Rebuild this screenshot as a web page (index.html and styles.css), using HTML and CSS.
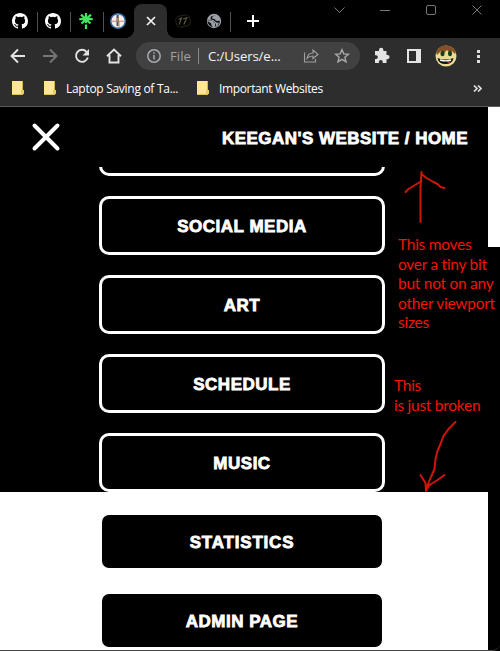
FILE: index.html
```html
<!DOCTYPE html>
<html lang="en">
<head>
<meta charset="utf-8">
<title>Keegan's Website</title>
<link rel="stylesheet" href="styles.css">
</head>
<body>
<div class="window">
  <div class="tabs">
    <div class="tab github"><svg width="16" height="16" viewBox="0 0 16 16"><path fill="#fff" d="M8 0C3.58 0 0 3.58 0 8c0 3.54 2.29 6.53 5.47 7.59.4.07.55-.17.55-.38 0-.19-.01-.82-.01-1.49-2.01.37-2.53-.49-2.69-.94-.09-.23-.48-.94-.82-1.13-.28-.15-.68-.52-.01-.53.63-.01 1.08.58 1.23.82.72 1.21 1.87.87 2.33.66.07-.52.28-.87.51-1.07-1.78-.2-3.64-.89-3.64-3.95 0-.87.31-1.59.82-2.15-.08-.2-.36-1.02.08-2.12 0 0 .67-.21 2.2.82a7.6 7.6 0 0 1 4 0c1.53-1.04 2.2-.82 2.2-.82.44 1.1.16 1.92.08 2.12.51.56.82 1.27.82 2.15 0 3.07-1.87 3.75-3.65 3.95.29.25.54.73.54 1.48 0 1.07-.01 1.93-.01 2.2 0 .21.15.46.55.38A8.01 8.01 0 0 0 16 8c0-4.42-3.58-8-8-8z"/></svg></div>
    <div class="tab github"><svg width="16" height="16" viewBox="0 0 16 16"><path fill="#fff" d="M8 0C3.58 0 0 3.58 0 8c0 3.54 2.29 6.53 5.47 7.59.4.07.55-.17.55-.38 0-.19-.01-.82-.01-1.49-2.01.37-2.53-.49-2.69-.94-.09-.23-.48-.94-.82-1.13-.28-.15-.68-.52-.01-.53.63-.01 1.08.58 1.23.82.72 1.21 1.87.87 2.33.66.07-.52.28-.87.51-1.07-1.78-.2-3.64-.89-3.64-3.95 0-.87.31-1.59.82-2.15-.08-.2-.36-1.02.08-2.12 0 0 .67-.21 2.2.82a7.6 7.6 0 0 1 4 0c1.53-1.04 2.2-.82 2.2-.82.44 1.1.16 1.92.08 2.12.51.56.82 1.27.82 2.15 0 3.07-1.87 3.75-3.65 3.95.29.25.54.73.54 1.48 0 1.07-.01 1.93-.01 2.2 0 .21.15.46.55.38A8.01 8.01 0 0 0 16 8c0-4.42-3.58-8-8-8z"/></svg></div>
    <div class="tab linktree"><svg width="16" height="16" viewBox="0 0 16 16"><path stroke="#43e660" stroke-width="2.200" d="M8 0v10M1.300 6.200h13.400M3 1.600l9.500 8.900M13 1.600l-9.500 8.900M8 11.500V16" fill="none"/></svg></div>
    <div class="tab last"><svg width="16" height="16" viewBox="0 0 16 16"><circle cx="8" cy="8" r="7.300" fill="#f2eeee" stroke="#2e69a0" stroke-width="1.500"/><path d="M2 8.300h12" stroke="#d99" stroke-width="1.300"/><path d="M7.600 2v11" stroke="#555" stroke-width="2.200"/><path d="M7.700 5v4M9 9v5" stroke="#c49a48" stroke-width="1"/></svg></div>
    <div class="tab active"><svg width="10" height="10" viewBox="0 0 10 10"><path d="M1 1l8 8M9 1L1 9" stroke="#f4f4f4" stroke-width="1.700"/></svg></div>
    <div class="tab after"><svg width="16" height="16" viewBox="0 0 16 16" fill="none"><rect x="1" y="2.500" width="14" height="11" rx="4" stroke="#25241c" transform="rotate(-12 8 8)"/><path d="M3.500 6.500L6.500 5l-2.300 6.500M8 6l3.800-1.200-3 6.700" stroke="#5b5640" stroke-width="1.200"/></svg></div>
    <div class="tab globe"><svg width="16" height="16" viewBox="0 0 16 16"><circle cx="8" cy="8" r="7.200" fill="#9ba0a6"/><path fill="#0a0a0a" d="M9.500 2.200L6.300 3.800 6 5.500l3 .7.500 1.300 1.500.5 2.700-.3A6 6 0 0 1 11 13.200l-1.200-.4.200-2L8.500 10 5.500 7.500 2.300 6.800 2 8.500l3 1.700.8 2.800 1.500 1.200A6.500 6.500 0 0 1 1.700 7l3.500.7 2.500 1 1.500 1.800L9 13.700l2.500-1 1.500-3-2.500-.3-1.800-1.200L7.500 7 4.500 6.500l.5-3z"/></svg></div>
    <svg class="plus" width="12" height="12" viewBox="0 0 12 12"><path d="M6 0v12M0 6h12" stroke="#fff" stroke-width="2"/></svg>
    <svg class="controls" width="160" height="12" viewBox="0 0 160 12" fill="none" stroke="#777" stroke-width="1"><path d="M4.500 3.500l5 5 5-5M50 6.500h10M142.500 1.500l9 9M151.500 1.500l-9 9"/><rect x="96.500" y="1.500" width="9" height="9" rx="1.500"/></svg>
  </div>
  <div class="toolbar">
    <svg class="nav" width="124" height="20" viewBox="0 0 124 20" fill="none" stroke="#e3e3e3" stroke-width="1.900">
      <path d="M16 10H3M9 3.500L2.500 10 9 16.500"/>
      <path stroke="#767676" d="M34 10h13M41 3.500l6.500 6.500-6.500 6.500"/>
      <path d="M77.500 5.800a6 6 0 1 0 1.300 5.700"/><path fill="#e3e3e3" stroke="none" d="M80 3v6.500h-6.500z"/>
      <path d="M98 10.200l7-6.700 7 6.700M100.500 9v7.500h9V9" />
    </svg>
    <div class="address">
      <svg width="14" height="14" viewBox="0 0 14 14" fill="none" stroke="#a8acb0" stroke-width="1.500"><circle cx="7" cy="7" r="6.200"/><path d="M7 6v4.500M7 3.300v1.500"/></svg>
      <span class="scheme">File</span><span class="bar"></span><span class="path">C:/Users/e...</span>
      <svg class="share" width="16" height="16" viewBox="0 0 16 16" fill="none" stroke="#a0a0a0" stroke-width="1.100"><path d="M1.500 4.500v9.500h11v-3M4 10.500c.5-3.600 2.500-5.400 6-5.500V2l5 4.500-5 4V8C7 8 5.500 8.700 4 10.500z"/></svg>
      <svg class="star" width="16" height="16" viewBox="0 0 16 16" fill="none" stroke="#aaa" stroke-width="1.400"><path d="M8 1.700l1.800 4.200 4.600.4-3.500 3 1.100 4.500L8 11.400l-4 2.400 1.100-4.500-3.500-3 4.600-.4z"/></svg>
    </div>
    <svg class="tools" width="122" height="24" viewBox="0 0 122 24">
      <path fill="#e4e4e4" d="M2 7h4V6a2.200 2.200 0 0 1 4.400 0v1H13.500v4h1a2.100 2.100 0 0 1 0 4.200h-1V19H9.700v-1.200a1.900 1.900 0 0 0-3.800 0V19H2v-4h1a1.900 1.900 0 0 0 0-3.800H2z"/>
      <path fill="#e4e4e4" fill-rule="evenodd" d="M34 5h14v14H34zM36 7v10h7V7z"/>
      <circle cx="73" cy="12" r="10.500" fill="#e9db91"/>
      <path fill="#865025" d="M63 8Q66 1 73 1.500T83 8l-1 2-3-3-2 2-3-3-3 3-3-2-4 4z"/>
      <ellipse cx="69.500" cy="9.500" rx="2" ry="2.800" fill="#173e1b"/><ellipse cx="77" cy="9.500" rx="2" ry="2.800" fill="#173e1b"/>
      <path fill="#111" d="M64.500 14q8 3 16 0-1 6-8 6t-8-6z"/><path d="M67 16q6 1.700 11 0" stroke="#fff" stroke-width="1.400" fill="none"/><path fill="#cf3030" d="M74 18.500l4-1-2 2z"/>
      <path fill="#ddd" d="M104 6h3v3h-3zM104 11h3v3h-3zM104 16h3v3h-3z"/>
    </svg>
  </div>
  <div class="bookmarks">
    <i class="folder"></i><i class="folder second"></i><span class="laptop">Laptop Saving of Ta...</span>
    <i class="folder third"></i><span class="important">Important Websites</span>
    <svg class="more" width="9" height="7" viewBox="0 0 9 7" fill="none" stroke="#ddd" stroke-width="1.700"><path d="M1 .5l3 3-3 3M5 .5l3 3-3 3"/></svg>
  </div>
  <div class="viewport">
    <main class="page">
      <header class="header">
        <svg width="30" height="30" viewBox="0 0 30 30"><path d="M3.500 3.500l23 23M26.500 3.500l-23 23" stroke="#fff" stroke-width="4" stroke-linecap="round"/></svg>
        <h1 class="title">KEEGAN'S WEBSITE / HOME</h1>
      </header>
      <nav class="menu">
        <a class="button"></a>
        <a class="button">SOCIAL MEDIA</a>
        <a class="button">ART</a>
        <a class="button">SCHEDULE</a>
        <a class="button">MUSIC</a>
        <a class="button wide">STATISTICS</a>
        <a class="button">ADMIN PAGE</a>
      </nav>
    </main>
    <div class="scrollbar"><div class="thumb"></div></div>
  </div>
  <p class="note note-move">This moves<br>over a tiny bit<br>but not on any<br>other viewport<br>sizes</p>
  <p class="note note-broken">This<br>is just broken</p>
  <svg class="arrows" width="100" height="340" viewBox="400 160 100 340" fill="none" stroke="#cf1609" stroke-width="2" stroke-linecap="round" stroke-linejoin="round">
    <path d="M420.500 222V187l1-15M405.500 192l3-3 13-8M421.500 174l5 4 7 4 4 2 3 3 4 1"/>
    <path d="M455.500 422l-7 7-5 7-3 8-3 7-2 8-1 10-4 9-4 10M420.500 475l5 8 .5 8M444.500 475l-7 5-8 5-3 5"/>
  </svg>
</div>
</body>
</html>
```
FILE: styles.css
```css
* { box-sizing: border-box; }
body { margin: 0; background: #000; }
svg { display: block; flex: none; }
.window { position: relative; width: 500px; height: 651px; overflow: hidden; display: flex; flex-direction: column; border-bottom: 1px solid #484848; border-bottom-right-radius: 8px; }
.tabs { height: 38px; flex: none; display: flex; padding: 4px 0 0 4px; background: #000; }
.tab { width: 33px; height: 34px; display: flex; align-items: center; justify-content: center; position: relative; }
.tab:not(.active):not(.last):not(.after)::after { content: ""; position: absolute; right: -1px; top: 8px; width: 1px; height: 20px; background: #505050; }
.tab.github, .tab.linktree { padding-right: 1px; }
.tab.last { width: 31px; padding-right: 2px; }
.tab.active { background: #2d2d2d; border-radius: 8px 8px 0 0; width: 33px; }
.tab.active::before, .tab.active::after { content: ""; position: absolute; bottom: 0; width: 8px; height: 8px; }
.tab.active::before { left: -8px; background: radial-gradient(circle at 0 0, #000 7.5px, #2d2d2d 8px); }
.tab.active::after { right: -8px; background: radial-gradient(circle at 100% 0, #000 7.5px, #2d2d2d 8px); }
.tab.after { width: 31px; }
.tab.globe { width: 32px; }
.plus { margin: 11px 0 0 17px; }
.controls { margin: 0 0 0 71px; }
.toolbar { height: 36px; flex: none; display: flex; align-items: center; background: #2d2d2d; }
.nav { margin-left: 9px; }
.address { height: 28px; width: 224px; margin-left: 3px; border-radius: 14px; background: #414141; display: flex; align-items: center; padding-left: 11px; font: 14px "Open Sans", sans-serif; }
.scheme { color: #a1a1a1; width: 28px; margin-left: 9px; font-size: 13.2px; }
.bar { width: 1px; height: 16px; background: #888; }
.path { color: #f4f4f4; width: 86px; margin-left: 9px; font-size: 13.2px; letter-spacing: -.12px; white-space: nowrap; }
.share { margin-left: 9px; }
.star { margin-left: 15px; }
.tools { margin-left: 13px; }
.bookmarks { height: 33px; flex: none; display: flex; align-items: center; padding: 0 0 4px 12px; border-bottom: 1px solid #5a5a5a; background: #2d2d2d; color: #fff; font: 12px "Open Sans", sans-serif; white-space: nowrap; }
.folder { width: 11px; height: 14px; flex: none; background: #ffe694; border-right: 1px solid #d8b545; border-bottom: 1px solid #e1be52; position: relative; }
.folder::after { content: ""; position: absolute; right: -2px; bottom: 0; width: 3px; height: 4px; background: #efca5e; }
.second { margin-left: 21px; }
.laptop { width: 114px; margin-left: 11px; letter-spacing: -.29px; }
.third { margin-left: 17px; }
.important { width: 105px; margin-left: 11px; letter-spacing: -.36px; }
.more { margin-left: 149px; }
.viewport { height: 543px; flex: none; display: flex; }
.page { width: 488px; height: 543px; overflow: hidden; background: linear-gradient(#000 385px, #fff 385px); }
.header { height: 60px; padding: 0 20px 0 31px; display: flex; align-items: center; justify-content: space-between; background: #000; color: #fff; position: relative; z-index: 1; }
.title { margin: 3px 0 0; font: bold 17px "Liberation Sans", sans-serif; letter-spacing: .46px; -webkit-text-stroke: .8px #fff; white-space: nowrap; }
.menu { width: 286px; margin: -50px 0 0 99px; display: flex; flex-direction: column; gap: 20px; }
.button { height: 59px; flex: none; border: 3px solid #fff; border-radius: 10px; display: flex; align-items: center; justify-content: center; padding-top: 2px; background: #000; color: #fff; font: bold 17px "Liberation Sans", sans-serif; letter-spacing: .5px; -webkit-text-stroke: .8px #fff; }
.button.wide { letter-spacing: .8px; }
.scrollbar { width: 12px; background: #000; }
.thumb { height: 140px; background: #fff; }
.note { position: absolute; margin: 0; color: #f31404; font: 15.5px/19.5px Lato, sans-serif; letter-spacing: -.27px; font-variant-ligatures: common-ligatures; white-space: nowrap; }
.note-move { left: 398px; top: 235px; }
.note-broken { left: 394px; top: 376px; }
.arrows { position: absolute; left: 400px; top: 160px; }
```
